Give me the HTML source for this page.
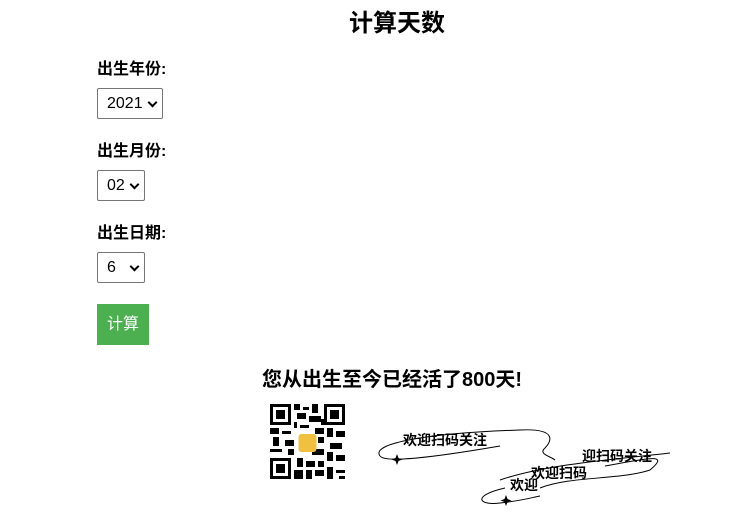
<!DOCTYPE html>
<html><head><meta charset="utf-8"><style>
body{margin:0;width:731px;height:517px;background:#fff;font-family:"Liberation Sans","Noto Sans CJK SC",sans-serif;position:relative;overflow:hidden}
.a{position:absolute}
h1{position:absolute;left:0;width:794px;top:8px;margin:0;text-align:center;font-size:24px;font-weight:bold;line-height:32px}
.l{position:absolute;left:97px;font-size:16px;font-weight:bold;line-height:20px}
.s{position:absolute;left:97px;height:31px;border:1px solid #767676;border-radius:2px;box-sizing:border-box;font-size:16px;line-height:29px;padding-left:9px}
.s:after{content:"";position:absolute;right:6px;top:10px;width:5px;height:5px;border-right:2px solid #000;border-bottom:2px solid #000;transform:rotate(45deg)}
.b{position:absolute;left:97px;top:304px;width:52px;height:41px;background:#4caf50;color:#fff;font-size:16px;line-height:41px;text-align:center}
.r{position:absolute;left:0;width:784px;top:367px;text-align:center;font-size:20px;font-weight:bold;line-height:26px}
.w{font-weight:bold;font-size:14px;position:absolute}
</style></head><body>
<h1>计算天数</h1>
<div class="l" style="top:60px">出生年份:</div>
<div class="s" style="top:88px;width:66px">2021</div>
<div class="l" style="top:142px">出生月份:</div>
<div class="s" style="top:170px;width:48px">02</div>
<div class="l" style="top:224px">出生日期:</div>
<div class="s" style="top:252px;width:48px">6</div>
<div class="b">计算</div>
<div class="r">您从出生至今已经活了800天!</div>
<svg class="a" style="left:270px;top:404px" width="75" height="75" viewBox="0 0 25 25">
<g fill="#000">
<path d="M0 0h7v7H0zM18 0h7v7h-7zM0 18h7v7H0z"/>
</g>
<g fill="#fff"><path d="M1 1h5v5H1zM19 1h5v5h-5zM1 19h5v5H1z"/></g>
<g fill="#000"><path d="M2 2h3v3H2zM20 2h3v3h-3zM2 20h3v3H2z"/>
<path d="M8 0h2v2H8zM11 1h2v1h-2zM14 0h2v3h-2zM9 3h3v2H9zM13 4h4v2h-4zM8 6h1v2H8zM10 7h3v1h-3zM0 8h3v2H0zM4 9h3v1H4zM15 8h3v2h-3zM19 8h2v3h-2zM22 9h3v2h-3zM1 11h2v3H1zM5 12h3v2H5zM16 11h2v2h-2zM20 13h4v2h-4zM0 15h4v1H0zM6 15h2v2H6zM14 15h4v2h-4zM19 16h2v3h-2zM22 17h3v2h-3zM9 18h2v3H9zM12 19h3v2h-3zM16 19h2v2h-2zM8 22h3v3H8zM12 22h2v3h-2zM15 22h3v2h-3zM19 21h2v4h-2zM22 22h3v1h-3zM23 24h2v1h-2zM17 5h1v2h-1z"/></g>
<rect x="9.5" y="10" width="6" height="6" rx="1" fill="#f0c040"/>
</svg>
<svg class="a" style="left:370px;top:418px" width="320" height="95">
<g fill="none" stroke="#000" stroke-width="1">
<path d="M10 38 C0 25 60 15 150 12 C190 10 180 25 175 30 C168 36 180 38 185 42"/>
<path d="M10 38 C15 45 60 40 130 28"/>
<path d="M130 62 C180 45 260 40 300 35"/>
<path d="M235 48 C280 40 300 35 280 52 C250 62 200 58 170 70"/>
<path d="M135 70 C100 78 110 88 130 85 C150 83 160 80 170 78"/>
</g>
<path d="M27 36l1.5 4 4 1.5-4 1.5-1.5 4-1.5-4-4-1.5 4-1.5z M136 77l1.5 4 4 1.5-4 1.5-1.5 4-1.5-4-4-1.5 4-1.5z"/>
</svg>
<div class="w" style="left:403px;top:430px">欢迎扫码关注</div>
<div class="w" style="left:582px;top:446px">迎扫码关注</div>
<div class="w" style="left:531px;top:463px">欢迎扫码</div>
<div class="w" style="left:510px;top:475px">欢迎</div>
</body></html>
